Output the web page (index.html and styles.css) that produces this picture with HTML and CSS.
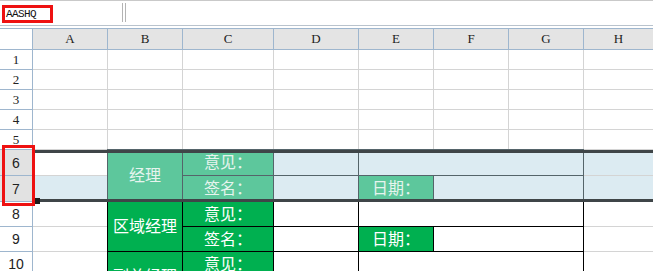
FILE: index.html
```html
<!DOCTYPE html>
<html lang="zh-CN">
<head>
<meta charset="utf-8">
<title>Sheet</title>
<link rel="stylesheet" href="styles.css">
</head>
<body>
<div class="formula-bar">
  <div class="name-box"><span class="name-mark">AASHQ</span></div>
  <div class="bar-divider"></div>
  <div class="formula-input"></div>
</div>
<div class="sheet">
  <div class="corner"></div>
  <div class="ch">A</div><div class="ch">B</div><div class="ch">C</div><div class="ch">D</div><div class="ch">E</div><div class="ch">F</div><div class="ch">G</div><div class="ch">H</div>

  <div class="rh">1</div><div class="c"></div><div class="c"></div><div class="c"></div><div class="c"></div><div class="c"></div><div class="c"></div><div class="c"></div><div class="c"></div>
  <div class="rh">2</div><div class="c"></div><div class="c"></div><div class="c"></div><div class="c"></div><div class="c"></div><div class="c"></div><div class="c"></div><div class="c"></div>
  <div class="rh">3</div><div class="c"></div><div class="c"></div><div class="c"></div><div class="c"></div><div class="c"></div><div class="c"></div><div class="c"></div><div class="c"></div>
  <div class="rh">4</div><div class="c"></div><div class="c"></div><div class="c"></div><div class="c"></div><div class="c"></div><div class="c"></div><div class="c"></div><div class="c"></div>
  <div class="rh">5</div><div class="c"></div><div class="c"></div><div class="c"></div><div class="c"></div><div class="c"></div><div class="c"></div><div class="c"></div><div class="c"></div>

  <div class="rh rh-sans rh-sel">6</div>
  <div class="c"></div>
  <div class="c f-sel span-r2 title">经理</div>
  <div class="c f-sel">意见：</div>
  <div class="c sel bd-sel"></div>
  <div class="c sel bd-sel span-c3"></div>
  <div class="c sel"></div>

  <div class="rh rh-sans rh-sel">7</div>
  <div class="c sel"></div>
  <div class="c f-sel">签名：</div>
  <div class="c sel bd-sel"></div>
  <div class="c f-sel">日期：</div>
  <div class="c sel bd-sel span-c2"></div>
  <div class="c sel"></div>

  <div class="rh rh-sans">8</div>
  <div class="c"></div>
  <div class="c f span-r2 title">区域经理</div>
  <div class="c f">意见：</div>
  <div class="c bd"></div>
  <div class="c bd span-c3"></div>
  <div class="c"></div>

  <div class="rh rh-sans">9</div>
  <div class="c"></div>
  <div class="c f">签名：</div>
  <div class="c bd"></div>
  <div class="c f">日期：</div>
  <div class="c bd span-c2"></div>
  <div class="c"></div>

  <div class="rh rh-sans">10</div>
  <div class="c"></div>
  <div class="c f span-r2 title">副总经理</div>
  <div class="c f">意见：</div>
  <div class="c bd"></div>
  <div class="c bd span-c3"></div>
  <div class="c"></div>

  <div class="rh rh-sans">11</div>
  <div class="c"></div>
  <div class="c f">签名：</div>
  <div class="c bd"></div>
  <div class="c f">日期：</div>
  <div class="c bd span-c2"></div>
  <div class="c"></div>

  <div class="selection"></div>
  <div class="fill-handle"></div>
  <div class="row-mark"></div>
</div>
</body>
</html>
```

FILE: styles.css
```css
html, body {
  margin: 0;
  padding: 0;
  overflow: hidden;
  background: #ffffff;
}

body {
  font-family: "Liberation Sans", Arial, sans-serif;
  color: #000;
}

.formula-bar {
  display: flex;
  height: 24px;
  border-top: 1px solid #c9c9c9;
  border-bottom: 1px solid #b9c3cd;
  background: #ffffff;
}

.name-box {
  width: 122px;
  flex: none;
}

.name-mark {
  display: block;
  box-sizing: border-box;
  width: 51px;
  height: 18px;
  margin: 4px 0 0 2px;
  padding-left: 1px;
  border: 3px solid #ee1111;
  font-family: "Liberation Mono", monospace;
  font-size: 11px;
  letter-spacing: -0.6px;
  line-height: 12px;
  color: #111;
}

.bar-divider {
  flex: none;
  width: 2px;
  height: 19px;
  margin-top: 2px;
  border-left: 1px solid #b4b4b4;
  border-right: 1px solid #b4b4b4;
}

.formula-input {
  flex: 1;
}

.sheet {
  position: relative;
  margin-top: 2px;
  display: grid;
  grid-template-columns: 32px 74px 74px 90px 84px 74px 74px 74px 1fr;
  grid-template-rows: 20px repeat(5, 19px) 25px 25px 24px 24px 24px 24px;
  gap: 1px;
  background: #d4d4d4;
  border-top: 1px solid #9eb6ce;
}

.corner {
  background: #ffffff;
  outline: 1px solid #9eb6ce;
}

.ch {
  background: #e4e4e4;
  outline: 1px solid #9eb6ce;
  display: flex;
  align-items: center;
  justify-content: center;
  font-family: "Liberation Serif", "DejaVu Serif", serif;
  font-size: 13px;
  color: #222;
  padding-bottom: 1px;
}

.rh {
  background: #ffffff;
  outline: 1px solid #9eb6ce;
  display: flex;
  align-items: center;
  justify-content: center;
  font-family: "Liberation Serif", "DejaVu Serif", serif;
  font-size: 13px;
  color: #222;
}

.rh-sans {
  font-family: "Liberation Sans", Arial, sans-serif;
  font-size: 14px;
}

.rh-sel {
  background: #e2e2e2;
}

.c {
  background: #ffffff;
  display: flex;
  align-items: center;
  justify-content: center;
  overflow: hidden;
  white-space: nowrap;
  font-family: "Noto Sans CJK SC", "Noto Sans", sans-serif;
  font-size: 16px;
  padding-bottom: 3px;
  box-sizing: border-box;
}

.sel {
  background: #dcebf2;
}

.f {
  background: #00b050;
  color: #ffffff;
  outline: 1px solid #000000;
}

.f-sel {
  background: #5dc79c;
  color: #e6f4ee;
  outline: 1px solid #55646a;
}

.bd {
  outline: 1px solid #000000;
}

.bd-sel {
  outline: 1px solid #55646a;
}

.span-r2 {
  grid-row: span 2;
}

.span-c2 {
  grid-column: span 2;
}

.span-c3 {
  grid-column: span 3;
}

.title {
  padding-bottom: 4px;
}

.selection {
  position: absolute;
  grid-row: 7 / 9;
  grid-column: 2 / -1;
  top: 0;
  bottom: -1px;
  left: 0;
  right: 0;
  border-top: 3px solid #3f4548;
  border-bottom: 3px solid #3f4548;
  pointer-events: none;
}

.fill-handle {
  position: absolute;
  grid-row: 8 / 9;
  grid-column: 2 / 3;
  left: 1px;
  bottom: -3px;
  width: 6px;
  height: 6px;
  background: #1c1c1c;
}

.row-mark {
  position: absolute;
  grid-row: 7 / 9;
  grid-column: 1 / 2;
  top: -5px;
  bottom: -5px;
  left: 2px;
  right: -3px;
  border: 3px solid #ee1111;
  pointer-events: none;
}
```
